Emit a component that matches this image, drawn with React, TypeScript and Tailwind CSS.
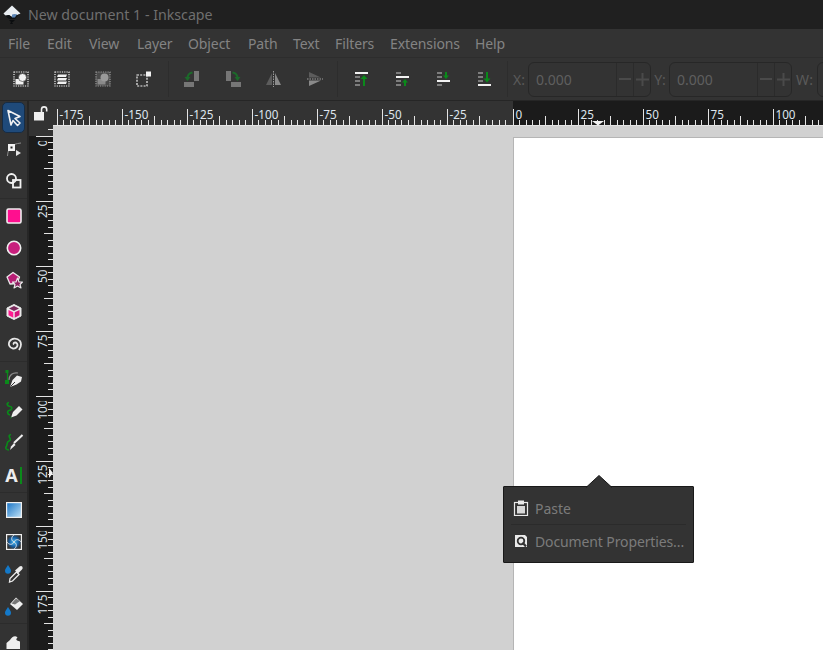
import React from "react";

const W = "#f2f2f2";
const G = "#7d7d7d";
const GR = "#0a8a1a";
const DG = "#1c6a2a";

function S({ s = 18, children }: { s?: number; children: React.ReactNode }) {
  return (
    <svg width={s} height={s} viewBox={`0 0 ${s} ${s}`} fill="none">
      {children}
    </svg>
  );
}

const Logo = () => (
  <svg width="18" height="20" viewBox="0 0 18 20" fill="none">
    <path d="M9 0.5 L17.5 8.5 L13 10.5 L11 9.5 L9 12 L6 10 L3 11 L0.5 8.5 Z" fill="#e9eef2" />
    <path d="M2 10.5 L6 10 L9 12 L11 9.5 L13 10.5 L16 9.5 L12 14 L6 14 Z" fill="#0d1114" />
    <path d="M9 9.5 L14 9 L12 12.5 L9 12.5 Z" fill="#5b86b8" />
    <path d="M6 15 H12 L10 17 H9 L10 19 H7 L8 17 Z" fill="#0b0d0f" />
  </svg>
);

const Sel1 = () => (
  <S s={16}>
    <rect x="1" y="1" width="14" height="14" stroke={W} strokeWidth="1.2" strokeDasharray="1.2 1.1" />
    <rect x="2.5" y="8" width="8" height="5.5" fill={W} />
    <circle cx="9.5" cy="6.5" r="4" fill={W} />
    <circle cx="9.5" cy="6.5" r="4" stroke="#333" strokeWidth="0.6" />
  </S>
);
const Sel2 = () => (
  <S s={16}>
    <rect x="1" y="1" width="14" height="14" stroke={W} strokeWidth="1.2" strokeDasharray="1.2 1.1" />
    <path d="M4 3.5 H13 L12 6 H3 Z M4 7 H13 L12 9.5 H3 Z M4 10.5 H13 L12 13 H3 Z" fill={W} />
  </S>
);
const Sel3 = () => (
  <S s={16}>
    <rect x="1" y="1" width="14" height="14" fill="#4a4a4a" stroke="#9a9a9a" strokeWidth="1.2" strokeDasharray="1.2 1.1" />
    <rect x="2.5" y="8" width="8" height="5.5" fill="#8a8a8a" />
    <circle cx="9.5" cy="6.5" r="4" fill="#9a9a9a" />
  </S>
);
const Sel4 = () => (
  <S s={16}>
    <rect x="1" y="4" width="10" height="11" stroke={W} strokeWidth="1.2" strokeDasharray="2 1.2" />
    <rect x="10" y="0.5" width="5" height="5" fill={W} />
  </S>
);
const RotL = () => (
  <S s={18}>
    <rect x="11" y="1" width="5" height="10" fill="#767676" />
    <rect x="1" y="12" width="10" height="5" fill="#767676" />
    <path d="M9.5 2.5 C6 3 4.5 5 4.5 8.5" stroke={DG} strokeWidth="2" />
    <path d="M1.5 7 L7.5 7 L4.5 11 Z" fill={DG} />
  </S>
);
const RotR = () => (
  <S s={18}>
    <rect x="2" y="1" width="5" height="10" fill="#767676" />
    <rect x="7" y="12" width="10" height="5" fill="#767676" />
    <path d="M8.5 2.5 C12 3 13.5 5 13.5 8.5" stroke={DG} strokeWidth="2" />
    <path d="M10.5 7 L16.5 7 L13.5 11 Z" fill={DG} />
  </S>
);
const FlipH = () => (
  <S s={18}>
    <path d="M7 3 L7 15 L1 15 Z" fill="#5c5c5c" />
    <path d="M10 3 L10 15 L16 15 Z" fill="#8a8a8a" />
    <path d="M8.5 1 V17" stroke="#9a9a9a" strokeWidth="1" strokeDasharray="1.5 1" />
  </S>
);
const FlipV = () => (
  <S s={18}>
    <path d="M3 2 L15 7.5 L3 7.5 Z" fill="#5c5c5c" />
    <path d="M3 10.5 L15 10.5 L3 16 Z" fill="#8a8a8a" />
    <path d="M1 9 H17" stroke="#a0a0a0" strokeWidth="1" strokeDasharray="1.5 1" />
  </S>
);
const Rows = ({ ys }: { ys: number[] }) => (
  <>
    {ys.map((y) => (
      <rect key={y} x="1" y={y} width="5" height="2" fill={G} />
    ))}
  </>
);
const Al1 = () => (
  <S s={16}>
    <rect x="1" y="1" width="13" height="2" fill={W} />
    <Rows ys={[5, 9, 13]} />
    <path d="M10 15 V7" stroke={GR} strokeWidth="2" />
    <path d="M6.5 8 L10 4 L13.5 8 Z" fill={GR} />
  </S>
);
const Al2 = () => (
  <S s={16}>
    <rect x="1" y="1" width="5" height="2" fill={G} />
    <rect x="1" y="5" width="13" height="2" fill={W} />
    <Rows ys={[9, 13]} />
    <path d="M10 15 V11" stroke={GR} strokeWidth="2" />
    <path d="M7 11.5 L10 8 L13 11.5 Z" fill={GR} />
  </S>
);
const Al3 = () => (
  <S s={16}>
    <Rows ys={[1, 5, 13]} />
    <rect x="1" y="9" width="13" height="2" fill={W} />
    <path d="M10 1 V5" stroke={GR} strokeWidth="2" />
    <path d="M7 4.5 L10 8 L13 4.5 Z" fill={GR} />
  </S>
);
const Al4 = () => (
  <S s={16}>
    <Rows ys={[1, 5, 9]} />
    <rect x="1" y="13" width="13" height="2" fill={W} />
    <path d="M10 1 V8" stroke={GR} strokeWidth="2" />
    <path d="M6.5 7.5 L10 11.5 L13.5 7.5 Z" fill={GR} />
  </S>
);

const TSel = () => (
  <S s={18}>
    <path d="M3 1.5 L15 7.5 L10 9.5 L15 14 L12.5 16.5 L8 11.5 L6 16 Z" fill="#1f4a7a" stroke={W} strokeWidth="1.6" strokeLinejoin="round" />
  </S>
);
const TNode = () => (
  <S s={18}>
    <path d="M2.5 16 C3 8 6 4 16 3" stroke="#8c8c8c" strokeWidth="1" />
    <rect x="3" y="4" width="7" height="7" fill={W} />
    <rect x="5.5" y="6.5" width="2" height="2" fill="#222" />
    <path d="M11 10 L16 13 L11 16 Z" fill="#e5e5e5" />
  </S>
);
const TShape = () => (
  <S s={18}>
    <circle cx="6.5" cy="6.5" r="4.5" stroke={W} strokeWidth="1.8" />
    <rect x="8" y="8" width="7.5" height="7.5" stroke={W} strokeWidth="1.8" />
  </S>
);
const TRect = () => (
  <S s={16}>
    <rect x="1" y="1" width="14" height="14" rx="1.5" fill="#ff0f8f" stroke="#f0f0f0" strokeWidth="1.6" />
  </S>
);
const TCirc = () => (
  <S s={16}>
    <circle cx="8" cy="8" r="6.7" fill="#c81f7d" stroke="#f0f0f0" strokeWidth="1.6" />
  </S>
);
const TStar = () => (
  <S s={18}>
    <path d="M8 1.5 L14.5 6 L12 12.5 L5 13 L2 6 Z" fill="#b81e75" stroke="#eaeaea" strokeWidth="1.3" strokeLinejoin="round" />
    <path d="M12.5 7 L14 11 L17.5 11 L15 13.5 L16 17 L12.5 15 L9 17 L10 13.5 L7.5 11 L11 11 Z" fill="#8d1f60" stroke="#eaeaea" strokeWidth="1.1" strokeLinejoin="round" />
  </S>
);
const TBox = () => (
  <S s={18}>
    <path d="M9 1.5 L16 5 V13 L9 16.5 L2 13 V5 Z" fill="#eaeaea" stroke="#eaeaea" strokeWidth="1" strokeLinejoin="round" />
    <path d="M9 3 L14 5.5 L9 8 L4 5.5 Z" fill="#7a2a5c" />
    <path d="M3.5 7 L8.3 9.3 V14.7 L3.5 12.3 Z" fill="#ff1a90" />
    <path d="M14.5 7 L9.7 9.3 V14.7 L14.5 12.3 Z" fill="#d8127d" />
  </S>
);
const TSpiral = () => (
  <S s={18}>
    <path d="M9 9.5 C7.5 8 10.5 6.5 12 8.5 C13.5 11 11 14 8 13.5 C4.5 13 3 9.5 4.5 6.5 C6.5 3 12 2.5 15 6 C16.5 8.5 16 12 14 15" stroke="#e6e6e6" strokeWidth="1.8" />
  </S>
);
const TPen = () => (
  <S s={20}>
    <path d="M5 11 C5 6 9 3 14 4" stroke="#8c8c8c" strokeWidth="1.2" />
    <path d="M3.5 2 V11" stroke={GR} strokeWidth="1.2" />
    <rect x="1.5" y="1" width="3" height="3" fill={GR} />
    <rect x="1" y="11" width="4" height="4" fill={GR} />
    <path d="M6 18 L8.5 11 L13 6.5 L18 8 L17 12.5 L12.5 15.5 Z" fill="#eeeeee" />
    <path d="M6.5 17.5 L11 13" stroke="#333" strokeWidth="1" />
  </S>
);
const TPencil = () => (
  <S s={20}>
    <path d="M5 1.5 C2 2 3 5 6 5.5 C9 6 8 9 5 9.5 C3 10 3 13 6 14" stroke={GR} strokeWidth="1.7" />
    <path d="M7 16.5 L9 11 L15 5 L18.5 8.5 L12.5 14.5 Z" fill="#efefef" />
    <path d="M6 18 L8 16 L7 15.5 Z" fill={GR} />
  </S>
);
const TCalli = () => (
  <S s={20}>
    <path d="M7 1.5 C2 3 9 6 5 8 C2 9 4 12 2 14 C1.5 15 2 17 5 17" stroke={GR} strokeWidth="1.7" />
    <path d="M18.5 2 L10 10" stroke="#efefef" strokeWidth="2" />
    <path d="M7 13.5 L10 10 L11.5 12 L6 17 Z" fill="#efefef" />
  </S>
);
const TText = () => (
  <div className="flex items-center">
    <span className="text-[18px] font-bold leading-none text-[#ededed] font-['Noto_Sans',sans-serif]">A</span>
    <span className="ml-[2px] h-[17px] w-[2px] bg-[#0a8a1a]" />
  </div>
);
const TGrad = () => (
  <svg width="16" height="16" viewBox="0 0 16 16" fill="none">
    <defs>
      <linearGradient id="gr" x1="0" y1="0" x2="1" y2="1">
        <stop offset="0" stopColor="#1672c4" />
        <stop offset="1" stopColor="#bfe2f7" />
      </linearGradient>
    </defs>
    <rect x="0.6" y="0.6" width="14.8" height="14.8" fill="url(#gr)" stroke="#f0f0f0" strokeWidth="1.2" />
  </svg>
);
const TMesh = () => (
  <svg width="16" height="16" viewBox="0 0 16 16" fill="none">
    <defs>
      <radialGradient id="ms">
        <stop offset="0" stopColor="#4cc0f5" />
        <stop offset="0.6" stopColor="#1561a8" />
        <stop offset="1" stopColor="#333" />
      </radialGradient>
    </defs>
    <rect x="0.6" y="0.6" width="14.8" height="14.8" fill="url(#ms)" stroke="#f0f0f0" strokeWidth="1.2" />
    <path d="M8 8 C4 6 6 2 8 1 M8 8 C10 4 14 6 15 8 M8 8 C12 10 10 14 8 15 M8 8 C6 12 2 10 1 8" stroke="#e4e4e4" strokeWidth="0.9" />
  </svg>
);
const TDrop = () => (
  <S s={20}>
    <path d="M4 1 C5.5 3.5 7 5 7 6.8 A3 3 0 0 1 1 6.8 C1 5 2.5 3.5 4 1 Z" fill="#1479c9" />
    <path d="M5.5 18 L6 14.5 L12.5 8 L15 10.5 L8.5 17 Z" stroke="#ededed" strokeWidth="1.3" />
    <path d="M11 6.5 L15.5 2.5 Q17.5 1.5 18.5 3 Q19 4.5 18 5.5 L14 9.5 L15 10.5 Z" fill="#ededed" />
  </S>
);
const TBucket = () => (
  <S s={20}>
    <path d="M12 1.5 L19 8 L13 14 L6 8 Z" fill="#efefef" />
    <path d="M7.5 7.5 L12 2.5 L16 5 L11 8.5 Z" fill="#777" />
    <path d="M4 11 C5.5 13.5 7 15 7 16.8 A3 3 0 0 1 1 16.8 C1 15 2.5 13.5 4 11 Z" fill="#1479c9" />
  </S>
);
const TEraser = () => (
  <S s={18}>
    <path d="M1.5 17 V11 L5 8 C7 5 10 3 12.5 5.5 C10.5 7.5 11 8.5 15 9.5 V17 Z" fill="#efefef" />
  </S>
);

const Paste = () => (
  <S s={16}>
    <rect x="1.5" y="2.5" width="13" height="13" stroke="#eaeaea" strokeWidth="1.2" />
    <rect x="5" y="0.5" width="6" height="4" fill="#eaeaea" />
    <path d="M4 6 H12 V13.5 H4 Z" fill="#d8d8d8" />
  </S>
);
const DocProps = () => (
  <S s={14}>
    <path d="M1 1 H11 L13 3 V13 H1 Z" fill="#eaeaea" />
    <circle cx="7" cy="7" r="3.3" stroke="#333" strokeWidth="1.8" />
    <path d="M8.5 8.5 L12 12.5" stroke="#333" strokeWidth="2.2" />
  </S>
);

const menus = [
  ["File", "w-[39px]"],
  ["Edit", "w-[42px]"],
  ["View", "w-[48px]"],
  ["Layer", "w-[51px]"],
  ["Object", "w-[60px]"],
  ["Path", "w-[45px]"],
  ["Text", "w-[42px]"],
  ["Filters", "w-[55px]"],
  ["Extensions", "w-[85px]"],
  ["Help", "w-[50px]"],
];

const Btn = ({ children }: { children: React.ReactNode }) => (
  <div className="flex h-[36px] w-[41px] shrink-0 items-center justify-center">{children}</div>
);
const Sep = ({ className }: { className: string }) => (
  <div className={`h-[36px] w-px shrink-0 bg-[#2d2d2d] ${className}`} />
);

const Num = ({ label, labelW, value }: { label: string; labelW: string; value?: string }) => (
  <>
    <span className={`${labelW} shrink-0 text-center text-[14px] text-[#5a5a5a]`}>{label}</span>
    <div className="flex h-[35px] w-[123px] shrink-0 items-center rounded-[6px] border border-[#272727]">
      <span className="flex-1 pl-[7px] text-[14px] text-[#5f5f5f]">{value}</span>
      <div className="flex h-full w-[17px] items-center justify-center border-l border-[#2b2b2b]">
        <span className="h-[2px] w-[12px] bg-[#4a4a4a]" />
      </div>
      <div className="flex h-full w-[17px] items-center justify-center border-l border-[#2b2b2b]">
        <svg width="13" height="13" viewBox="0 0 13 13">
          <path d="M6.5 0 V13 M0 6.5 H13" stroke="#4a4a4a" strokeWidth="2" />
        </svg>
      </div>
    </div>
  </>
);

const HRuler = () => {
  const width = 770;
  const ticks: React.ReactNode[] = [];
  const labels: React.ReactNode[] = [];
  for (let i = -70; i <= 50; i++) {
    const raw = (i < 0 ? 512.3 : 513.3) + 6.5 * i - 53;
    const x = Math.floor(raw) + 0.5;
    if (x < 0 || x > width) continue;
    const h = i % 10 === 0 ? 16 : i % 5 === 0 ? 9 : 5;
    ticks.push(<path key={i} d={`M${x} ${24 - h} V24`} stroke="#e4e4e4" strokeWidth="1" />);
    if (i % 10 === 0) {
      labels.push(
        <text key={i} x={x + 2} y={17.5} fontSize="11.7" fill="#dfe6ee" fontFamily="'Noto Sans', sans-serif">
          {String((i * 25) / 10)}
        </text>
      );
    }
  }
  return (
    <svg width={width} height="25" viewBox={`0 0 ${width} 25`} className="block">
      <rect x="0" y="0" width="460" height="25" fill="#333333" />
      <rect x="460" y="0" width="310" height="25" fill="#1b1b1b" />
      {ticks}
      {labels}
      <path d="M0 24.5 H770" stroke="#e4e4e4" strokeWidth="1" />
      <path d="M539 20 H551 L545 24.5 Z" fill="#f2f2f2" />
    </svg>
  );
};

const VRuler = () => {
  const h = 524;
  const ticks: React.ReactNode[] = [];
  const labels: React.ReactNode[] = [];
  for (let i = -1; i <= 80; i++) {
    const y = Math.floor(136 + 6.5 * i - 126) + 0.5;
    const l = i % 10 === 0 ? 17 : i % 5 === 0 ? 9 : 5;
    ticks.push(<path key={i} d={`M${24 - l} ${y} H24`} stroke="#e4e4e4" strokeWidth="1" />);
    if (i >= 0 && i < 80 && i % 10 === 0) {
      const v = (i * 25) / 10;
      labels.push(
        <g key={i}>
          <text
            transform={`translate(17.5 ${y + 3}) rotate(-90)`}
            textAnchor="end"
            fontSize="11.7"
            fill="#dfe6ee"
            fontFamily="'Noto Sans', sans-serif"
          >
            {String(v)}
          </text>
          {v === 0 || v === 100 || v === 150 ? <rect x="8" y={y + 1.5} width="9" height="3" fill="#1b1b1b" /> : null}
        </g>
      );
    }
  }
  return (
    <svg width="24" height={h} viewBox={`0 0 24 ${h}`} className="block">
      <rect x="0" y="0" width="24" height="10" fill="#333333" />
      <rect x="0" y="10" width="24" height={h} fill="#1b1b1b" />
      {labels}
      {ticks}
      <path d="M20 342 L24 347 L20 352 Z" fill="#f2f2f2" />
    </svg>
  );
};

const Tool = ({ children, active }: { children: React.ReactNode; active?: boolean }) => (
  <div className="flex h-[32px] shrink-0 items-center justify-center">
    {active ? (
      <div className="mt-px flex h-[31px] w-[23px] items-center justify-center rounded-[5px] border border-[#162c45] bg-[#1f4a7a]">
        {children}
      </div>
    ) : (
      children
    )}
  </div>
);
const ToolSep = () => <div className="my-px h-px shrink-0 bg-[#2c2c2c]" />;

export default function App() {
  return (
    <div className="relative flex h-[650px] w-[823px] flex-col overflow-hidden bg-[#333333] font-['Noto_Sans',sans-serif]">
      <div className="flex h-[29px] shrink-0 items-center bg-[#202020] pl-[3px]">
        <Logo />
        <span className="ml-[7px] text-[14.2px] text-[#6f6f6f]">New document 1 - Inkscape</span>
      </div>

      <div className="flex h-[29px] shrink-0 items-center border-b border-[#2d2d2d] bg-[#333333]">
        {menus.map(([m, w]) => (
          <span key={m} className={`${w} shrink-0 whitespace-nowrap pl-[8px] text-[14px] tracking-[-0.1px] text-[#838383]`}>
            {m}
          </span>
        ))}
      </div>

      <div className="flex h-[43px] shrink-0 items-center overflow-hidden border-b border-[#262626] bg-[#333333]">
        <Btn><Sel1 /></Btn>
        <Btn><Sel2 /></Btn>
        <Btn><Sel3 /></Btn>
        <Btn><Sel4 /></Btn>
        <Sep className="ml-[4px] mr-[2px]" />
        <Btn><RotL /></Btn>
        <Btn><RotR /></Btn>
        <Btn><FlipH /></Btn>
        <Btn><FlipV /></Btn>
        <Sep className="ml-[2px] mr-[3px]" />
        <Btn><Al1 /></Btn>
        <Btn><Al2 /></Btn>
        <Btn><Al3 /></Btn>
        <Btn><Al4 /></Btn>
        <Sep className="ml-[2px] mr-[2px]" />
        <Num label="X:" labelW="w-[18px]" value="0.000" />
        <Num label="Y:" labelW="w-[18px]" value="0.000" />
        <Num label="W:" labelW="w-[25px]" />
      </div>

      <div className="flex min-h-0 flex-1">
        <div className="flex w-[27px] shrink-0 flex-col bg-[#333333]">
          <Tool active><TSel /></Tool>
          <Tool><TNode /></Tool>
          <Tool><TShape /></Tool>
          <ToolSep />
          <Tool><TRect /></Tool>
          <Tool><TCirc /></Tool>
          <Tool><TStar /></Tool>
          <Tool><TBox /></Tool>
          <Tool><TSpiral /></Tool>
          <ToolSep />
          <Tool><TPen /></Tool>
          <Tool><TPencil /></Tool>
          <Tool><TCalli /></Tool>
          <Tool><TText /></Tool>
          <ToolSep />
          <Tool><TGrad /></Tool>
          <Tool><TMesh /></Tool>
          <Tool><TDrop /></Tool>
          <Tool><TBucket /></Tool>
          <ToolSep />
          <Tool><TEraser /></Tool>
        </div>
        <div className="w-[2px] shrink-0 bg-[#262626]" />
        <div className="grid min-w-0 flex-1 grid-cols-[24px_1fr] grid-rows-[25px_1fr]">
          <div className="flex items-center justify-center bg-[#333333] pr-[1px]">
            <svg width="14" height="15" viewBox="0 0 14 15" fill="none">
              <rect x="0" y="6" width="10" height="8.5" fill="#f0f0f0" />
              <path d="M7.5 6 V3.5 A2.6 2.6 0 0 1 12.7 3.5 V5.5" stroke="#f0f0f0" strokeWidth="1.6" />
            </svg>
          </div>
          <div className="min-w-0 overflow-hidden">
            <HRuler />
          </div>
          <div className="overflow-hidden">
            <VRuler />
          </div>
          <div className="flex min-h-0 bg-[#d1d1d1] pl-[460px] pt-[11px]">
            <div className="flex-1 border-l border-t border-[#b5b5b5] bg-white" />
          </div>
        </div>
      </div>

      <div className="absolute left-[503px] top-[486px] h-[77px] w-[191px] rounded-[1px] border border-[#191919] bg-[#333333]">
        <svg width="26" height="13" viewBox="0 0 26 13" className="absolute left-[82px] top-[-12px]">
          <path d="M0 12.5 L13 0.5 L26 12.5" fill="#333333" stroke="#191919" strokeWidth="1" />
          <rect x="1" y="12" width="24" height="1" fill="#333333" />
        </svg>
        <div className="flex h-[37px] items-center pl-[9px] pt-[5px]">
          <span className="flex w-[22px] shrink-0 items-center">
            <Paste />
          </span>
          <span className="text-[14px] text-[#7b7b7b]">Paste</span>
        </div>
        <div className="mx-[7px] h-px bg-[#2b2b2b]" />
        <div className="flex h-[32px] items-center pl-[10px]">
          <span className="flex w-[21px] shrink-0 items-center">
            <DocProps />
          </span>
          <span className="whitespace-nowrap text-[14px] tracking-[-0.12px] text-[#7b7b7b]">Document Properties...</span>
        </div>
      </div>
    </div>
  );
}
